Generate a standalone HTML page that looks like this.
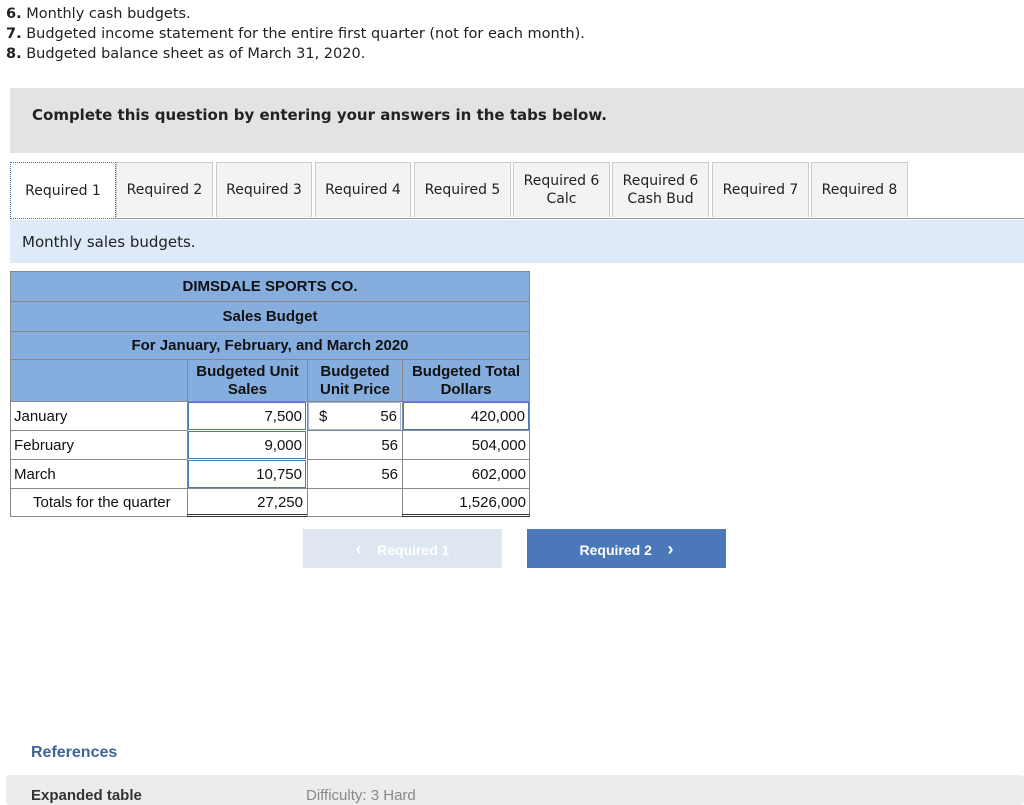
<!DOCTYPE html>
<html><head><style>
body{margin:0;width:1024px;height:798px;overflow:hidden;background:#fff;font-family:"Liberation Sans",Arial,sans-serif;color:#222;position:relative}
.a{position:absolute}
.d{font-family:"DejaVu Sans","Liberation Sans",sans-serif}
.t{position:absolute;top:162px;height:55px;background:#f3f3f3;border:1px solid #ccc;border-bottom:none;font-size:14px;display:flex;align-items:center;justify-content:center;text-align:center;line-height:18px;box-sizing:border-box;font-family:"DejaVu Sans","Liberation Sans",sans-serif}
.h{background:#85aedf;border:1px solid #888;box-sizing:border-box;position:absolute;font-weight:bold;font-size:15px;text-align:center;color:#111}
.c{position:absolute;box-sizing:border-box;font-size:15px;line-height:29px;color:#111;padding-top:1px}
</style></head><body>
<div class="a d" style="left:6px;top:4px;font-size:14.5px;line-height:20px;color:#222">
<div><b>6.</b> Monthly cash budgets.</div>
<div><b>7.</b> Budgeted income statement for the entire first quarter (not for each month).</div>
<div><b>8.</b> Budgeted balance sheet as of March 31, 2020.</div></div>
<div class="a" style="left:10px;top:88px;width:1014px;height:65px;background:#e3e3e3"></div>
<div class="a d" style="left:32px;top:106px;font-size:15px;font-weight:bold">Complete this question by entering your answers in the tabs below.</div>
<div class="a" style="left:10px;top:218px;width:1014px;height:1px;background:#999"></div>
<div class="t" style="left:10px;width:106px;background:#fff;border:1px dotted #3a6fb5;height:57px">Required 1</div>
<div class="t" style="left:116px;width:97px">Required 2</div>
<div class="t" style="left:216px;width:96px">Required 3</div>
<div class="t" style="left:315px;width:96px">Required 4</div>
<div class="t" style="left:414px;width:97px">Required 5</div>
<div class="t" style="left:513px;width:97px">Required 6<br>Calc</div>
<div class="t" style="left:612px;width:97px">Required 6<br>Cash Bud</div>
<div class="t" style="left:712px;width:97px">Required 7</div>
<div class="t" style="left:811px;width:97px">Required 8</div>
<div class="a" style="left:10px;top:220px;width:1014px;height:43px;background:#deeaf7"></div>
<div class="a d" style="left:22px;top:233px;font-size:15px">Monthly sales budgets.</div>

<div class="h" style="left:10px;top:271px;width:520px;height:31px;line-height:30px">DIMSDALE SPORTS CO.</div>
<div class="h" style="left:10px;top:301px;width:520px;height:31px;line-height:30px">Sales Budget</div>
<div class="h" style="left:10px;top:331px;width:520px;height:29px;line-height:28px">For January, February, and March 2020</div>
<div class="h" style="left:10px;top:359px;width:178px;height:43px"></div>
<div class="h" style="left:187px;top:359px;width:121px;height:43px;line-height:18px;padding-top:3px">Budgeted Unit<br>Sales</div>
<div class="h" style="left:307px;top:359px;width:96px;height:43px;line-height:18px;padding-top:3px">Budgeted<br>Unit Price</div>
<div class="h" style="left:402px;top:359px;width:128px;height:43px;line-height:18px;padding-top:3px">Budgeted Total<br>Dollars</div>
<div class="a" style="left:10px;top:401px;width:520px;height:116px;border:1px solid #888;border-top:none;box-sizing:border-box"></div>
<div class="a" style="left:10px;top:430px;width:177px;height:1px;background:#888"></div>
<div class="a" style="left:10px;top:459px;width:177px;height:1px;background:#888"></div>
<div class="a" style="left:10px;top:488px;width:520px;height:1px;background:#888"></div>
<div class="a" style="left:187px;top:401px;width:1px;height:116px;background:#888"></div>
<div class="a" style="left:307px;top:401px;width:1px;height:116px;background:#888"></div>
<div class="a" style="left:402px;top:401px;width:1px;height:116px;background:#888"></div>
<div class="a" style="left:307px;top:430px;width:223px;height:1px;background:#888"></div>
<div class="a" style="left:307px;top:459px;width:223px;height:1px;background:#888"></div>
<div class="a" style="left:187px;top:514px;width:120px;height:3px;border-top:1px solid #333;border-bottom:1px solid #333;box-sizing:border-box"></div>
<div class="a" style="left:402px;top:514px;width:128px;height:3px;border-top:1px solid #333;border-bottom:1px solid #333;box-sizing:border-box"></div>
<div class="c" style="left:14px;top:401px">January</div>
<div class="c" style="left:14px;top:430px">February</div>
<div class="c" style="left:14px;top:459px">March</div>
<div class="c" style="left:33px;top:487px">Totals for the quarter</div>
<div class="c" style="left:188px;top:402px;width:118px;height:28px;border:1px solid #4a78b8;text-align:right;padding-right:3px;line-height:26px">7,500</div>
<div class="c" style="left:188px;top:431px;width:118px;height:28px;border:1px solid #4a78b8;text-align:right;padding-right:3px;line-height:26px">9,000</div>
<div class="c" style="left:188px;top:460px;width:118px;height:28px;border:1px solid #4a78b8;text-align:right;padding-right:3px;line-height:26px">10,750</div>
<div class="c" style="left:188px;top:487px;width:118px;text-align:right;padding-right:3px">27,250</div>
<div class="c" style="left:308px;top:402px;width:93px;height:28px;border:1px solid #9bb5dc;text-align:right;padding-right:3px;line-height:26px"><span style="float:left;padding-left:10px">$</span>56</div>
<div class="c" style="left:308px;top:430px;width:93px;text-align:right;padding-right:3px">56</div>
<div class="c" style="left:308px;top:459px;width:93px;text-align:right;padding-right:3px">56</div>
<div class="c" style="left:403px;top:402px;width:126px;height:28px;border:1px solid #4a78b8;text-align:right;padding-right:3px;line-height:26px">420,000</div>
<div class="c" style="left:403px;top:430px;width:126px;text-align:right;padding-right:3px">504,000</div>
<div class="c" style="left:403px;top:459px;width:126px;text-align:right;padding-right:3px">602,000</div>
<div class="c" style="left:403px;top:487px;width:126px;text-align:right;padding-right:3px">1,526,000</div>

<div class="a" style="left:303px;top:529px;width:199px;height:39px;background:#dde6f1;color:#fff;font-size:14px;font-weight:bold;text-align:center;line-height:40px"><span style="font-size:18px">&lsaquo;</span>&nbsp;&nbsp;&nbsp;&nbsp;Required 1</div>
<div class="a" style="left:527px;top:529px;width:199px;height:39px;background:#4a78b8;color:#fff;font-size:14px;font-weight:bold;text-align:center;line-height:40px">Required 2&nbsp;&nbsp;&nbsp;&nbsp;<span style="font-size:18px">&rsaquo;</span></div>
<div class="a" style="left:31px;top:744px;font-size:16px;font-weight:bold;color:#3d6598">References</div>
<div class="a" style="left:6px;top:775px;width:1018px;height:30px;background:#ececec;border-radius:4px"></div>
<div class="a" style="left:31px;top:787px;font-size:15px;font-weight:bold;color:#333">Expanded table</div>
<div class="a" style="left:306px;top:787px;font-size:15px;color:#888">Difficulty: 3 Hard</div>
</body></html>
